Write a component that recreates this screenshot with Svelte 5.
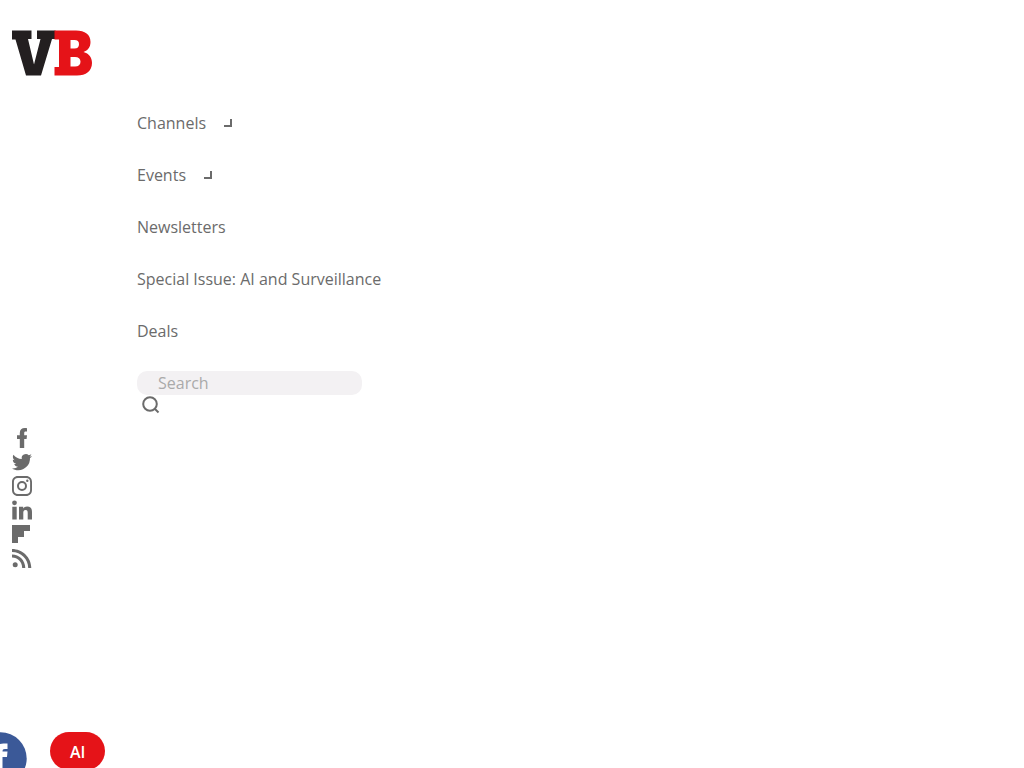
<script lang="ts">
  interface NavItem {
    label: string;
    hasMenu?: boolean;
  }

  interface SocialLink {
    name: string;
    path: string;
  }

  const navItems: NavItem[] = [
    { label: 'Channels', hasMenu: true },
    { label: 'Events', hasMenu: true },
    { label: 'Newsletters' },
    { label: 'Special Issue: AI and Surveillance' },
    { label: 'Deals' }
  ];

  const socialLinks: SocialLink[] = [
    {
      name: 'Facebook',
      path: 'M7.800 20V11H5V7.300h2.800V5c0-3.300 1.900-5 5-5 1 0 1.700.1 2.200.2v3.400h-1.300c-1.200 0-1.500.6-1.500 1.500v2.200H15l-.4 3.700h-2.400v9z'
    },
    {
      name: 'Twitter',
      path: 'M20 3.900c-.7.3-1.500.5-2.400.6.8-.5 1.500-1.300 1.800-2.200-.8.5-1.700.8-2.600 1A4.100 4.100 0 0 0 9.800 7C6.400 6.900 3.400 5.200 1.400 2.700.3 4.600.9 7 2.700 8.200c-.7 0-1.300-.2-1.900-.5 0 2 1.400 3.700 3.300 4.100-.6.2-1.200.2-1.900.1.500 1.600 2 2.800 3.800 2.800A8.300 8.300 0 0 1 0 16.400c1.800 1.200 4 1.800 6.300 1.800A11.700 11.700 0 0 0 18 6c.8-.6 1.500-1.300 2-2.100z'
    },
    {
      name: 'Instagram',
      path: 'M6 0h8c3.600 0 6 2.400 6 6v8c0 3.600-2.400 6-6 6H6c-3.600 0-6-2.400-6-6V6c0-3.600 2.400-6 6-6zm0 1.900C3.400 1.900 1.900 3.400 1.900 6v8c0 2.600 1.500 4.100 4.100 4.100h8c2.600 0 4.100-1.500 4.100-4.100V6c0-2.600-1.500-4.100-4.100-4.100zM10 5a5 5 0 1 1 0 10 5 5 0 0 1 0-10zm0 2a3 3 0 1 0 0 6 3 3 0 0 0 0-6zM15.300 3.500a1.200 1.200 0 1 1 0 2.400 1.200 1.200 0 0 1 0-2.400z'
    },
    {
      name: 'LinkedIn',
      path: 'M.3 6.700h4.400v12.900H.3zM2.500.4a2.400 2.400 0 1 1 0 4.800 2.400 2.400 0 0 1 0-4.800zM7 6.700h4.200v1.700c.7-1.300 2.100-2 3.900-2 4 0 4.900 2.500 4.900 6v7.200h-4.300v-6.400c0-1.700 0-3.200-2.100-3.200s-2.300 1.500-2.300 3.100v6.500H7z'
    },
    { name: 'Flipboard', path: 'M0 1h18v6h-6v6H6v6H0z' },
    {
      name: 'RSS',
      path: 'M3.200 14.200a2.500 2.500 0 1 1 0 5 2.500 2.500 0 0 1 0-5zM0 6.500C7.200 6.500 13.300 12.300 13.300 20h-3.100C10.200 14 5.700 9.500 0 9.500zM0 1c10.500 0 19.300 8.500 19.300 19h-3.100C16.200 11 9 4 0 4z'
    }
  ];

  let query = $state('');
</script>

<div class="page">
  <header>
    <a class="logo" href="/" aria-label="VB">
      <svg width="80" height="46" viewBox="0 0 80 46" aria-hidden="true">
        <path fill="#231f20" d="M0 .5h19.500v8.500h-3.500l6 25.500 6.500-25.500H25V.5h18.500V9H40L29 45.500H14L3.500 9.500H0z" />
        <path
          fill="#e51318"
          fill-rule="evenodd"
          d="M42.500.5H64c9 0 14.500 4 14.500 11.500 0 5-2.500 8.500-7 10 5.500 1.500 8.500 5.500 8.500 11 0 8-6 12.500-15 12.500H42.500V37h4.500V9.500h-4.500zM58.500 10v8.500h4c3 0 4.500-1.500 4.500-4.300S65.500 10 62.500 10zm0 17v9.500h4.500c3.500 0 5.500-1.700 5.500-4.800S66.500 27 63 27z"
        />
      </svg>
    </a>

    <nav>
      <ul class="menu">
        {#each navItems as item}
          <li>
            <a href="/">{item.label}</a>
            {#if item.hasMenu}
              <span class="arrow"></span>
            {/if}
          </li>
        {/each}
      </ul>

      <form class="search" onsubmit={(event) => event.preventDefault()}>
        <input type="search" placeholder="Search" aria-label="Search" bind:value={query} />
        <button type="submit" aria-label="Submit search">
          <svg width="18" height="18" viewBox="0 0 18 18" fill="none" aria-hidden="true">
            <circle cx="8" cy="8" r="6.800" />
            <path d="M12.500 12.500l4 4" />
          </svg>
        </button>
      </form>
    </nav>

    <ul class="social">
      {#each socialLinks as link}
        <li>
          <a href="/" aria-label={link.name}>
            <svg width="20" height="20" viewBox="0 0 20 20" aria-hidden="true">
              <path fill="currentColor" fill-rule="evenodd" d={link.path} />
            </svg>
          </a>
        </li>
      {/each}
    </ul>
  </header>

  <div class="article-bar">
    <a class="share" href="/" aria-label="Share on Facebook">
      <svg width="53" height="53" viewBox="0 0 53 53" aria-hidden="true">
        <circle cx="26.500" cy="26.500" r="26.200" fill="#3b5998" />
        <path
          fill="#fff"
          d="M22.500 41V25H19v-5.500h3.500V18c0-4.500 2.500-6.500 7-6.500h4V17h-2.500c-2 0-2.500.8-2.500 2.500h5L33 25h-4.500v16z"
        />
      </svg>
    </a>
    <a class="tag" href="/">AI</a>
  </div>
</div>

<style>
  :global(body) {
    background: #fff;
  }

  .page {
    overflow: hidden;
    color: #6b6b6b;
    font-family: 'Open Sans', sans-serif;
    font-size: 16px;
    line-height: 24px;
  }

  header {
    padding: 30px 12px 0;
  }

  ul {
    margin: 0;
    padding: 0;
    list-style: none;
  }

  a {
    color: inherit;
    text-decoration: none;
  }

  svg {
    display: block;
  }

  .logo {
    display: block;
    width: 80px;
  }

  nav {
    margin: 35px 0 0 125px;
  }

  .menu {
    display: flex;
    flex-direction: column;
    gap: 28px;
  }

  .menu li {
    display: flex;
    align-items: center;
    gap: 18px;
  }

  .arrow {
    width: 6px;
    height: 6px;
    border-right: 2px solid #6b6b6b;
    border-bottom: 2px solid #6b6b6b;
  }

  /* Search */
  .search {
    margin-top: 28px;
  }

  .search input {
    display: block;
    box-sizing: border-box;
    width: 225px;
    max-width: 100%;
    height: 24px;
    margin: 0;
    padding: 0 21px;
    border: 0;
    border-radius: 10px;
    background: #f3f1f3;
    color: #6b6b6b;
    font: inherit;
    appearance: none;
  }

  .search input::placeholder {
    color: #aaa;
    opacity: 1;
  }

  .search button {
    display: block;
    margin: 0;
    padding: 1px 5px;
    border: 0;
    background: none;
    color: #6b6b6b;
    cursor: pointer;
  }

  .search svg {
    stroke: currentColor;
    stroke-width: 2;
  }

  /* Social links */
  .social {
    display: flex;
    flex-direction: column;
    align-items: flex-start;
    gap: 4px;
    margin-top: 13px;
  }

  .article-bar {
    display: flex;
    align-items: flex-start;
    gap: 23px;
    margin: 164px 0 0 -26px;
  }

  .tag {
    padding: 8px 20px 6px;
    border-radius: 19px;
    background: #e51318;
    color: #fff;
    font-weight: 600;
  }
</style>
